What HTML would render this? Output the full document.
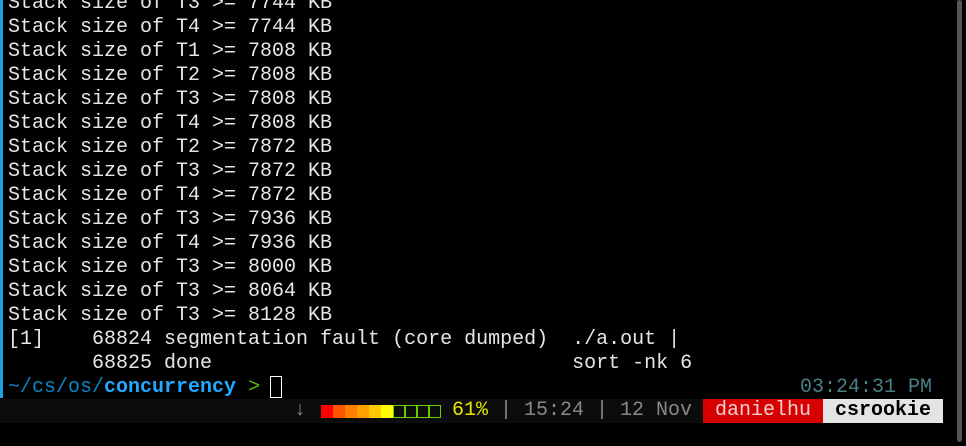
<!DOCTYPE html>
<html><head><meta charset="utf-8"><style>
html,body{margin:0;padding:0;background:#000;width:966px;height:446px;overflow:hidden}
body{position:relative;font-family:"Liberation Mono",monospace;font-size:20px;color:#e6e6e6}
.l{position:absolute;left:8px;height:24px;line-height:24px;white-space:pre;margin-top:2px}
#bar{position:absolute;left:0;top:-10px;width:3px;height:408px;background:#1a9fe0}
#sb{position:absolute;left:0;top:399px;width:943px;height:24px;background:#0c0c0c}
.s{position:absolute;top:399px;height:24px;line-height:24px;white-space:pre}
.blk{position:absolute;top:405px;width:12px;height:13px;box-sizing:border-box}
#scroll{position:absolute;left:957px;top:0;width:5px;height:442px;background:#555;border-radius:3px}
</style></head><body>
<div id="bar"></div>
<div class="l" style="top:-10px">Stack size of T3 &gt;= 7744 KB</div>
<div class="l" style="top:14px">Stack size of T4 &gt;= 7744 KB</div>
<div class="l" style="top:38px">Stack size of T1 &gt;= 7808 KB</div>
<div class="l" style="top:62px">Stack size of T2 &gt;= 7808 KB</div>
<div class="l" style="top:86px">Stack size of T3 &gt;= 7808 KB</div>
<div class="l" style="top:110px">Stack size of T4 &gt;= 7808 KB</div>
<div class="l" style="top:134px">Stack size of T2 &gt;= 7872 KB</div>
<div class="l" style="top:158px">Stack size of T3 &gt;= 7872 KB</div>
<div class="l" style="top:182px">Stack size of T4 &gt;= 7872 KB</div>
<div class="l" style="top:206px">Stack size of T3 &gt;= 7936 KB</div>
<div class="l" style="top:230px">Stack size of T4 &gt;= 7936 KB</div>
<div class="l" style="top:254px">Stack size of T3 &gt;= 8000 KB</div>
<div class="l" style="top:278px">Stack size of T3 &gt;= 8064 KB</div>
<div class="l" style="top:302px">Stack size of T3 &gt;= 8128 KB</div>
<div class="l" style="top:326px">[1]    68824 segmentation fault (core dumped)  ./a.out |</div>
<div class="l" style="top:350px">       68825 done                              sort -nk 6</div>
<div class="l" style="top:374px"><span style="color:#0a86c4">~/cs/os/</span><span style="color:#1fa9ff;font-weight:bold">concurrency</span> <span style="color:#5fbf00">&gt;</span></div>
<div style="position:absolute;left:270px;top:376px;width:12px;height:22px;border:1px solid #fff;box-sizing:border-box"></div>
<div class="l" style="top:374px;left:800px;color:#4a7f86">03:24:31 PM</div>
<div id="sb"></div>
<div class="s" style="left:294px;color:#888">↓</div>
<div class="blk" style="left:321px;background:#ff0000"></div>
<div class="blk" style="left:333px;background:#ff5500"></div>
<div class="blk" style="left:345px;background:#ff7f00"></div>
<div class="blk" style="left:357px;background:#ffa000"></div>
<div class="blk" style="left:369px;background:#ffc800"></div>
<div class="blk" style="left:381px;background:#ffff00"></div>
<div class="blk" style="left:393px;border:1px solid #66cc00"></div>
<div class="blk" style="left:405px;border:1px solid #66cc00"></div>
<div class="blk" style="left:417px;border:1px solid #66cc00"></div>
<div class="blk" style="left:429px;border:1px solid #66cc00"></div>
<div class="s" style="left:452px;color:#e6e600">61%</div>
<div class="s" style="left:488px;color:#888"> | 15:24 | 12 Nov</div>
<div class="s" style="left:703px;width:120px;background:#d70000;color:#f0d0d0;text-align:center">danielhu</div>
<div class="s" style="left:823px;width:120px;background:#e4e4e4;color:#000;font-weight:bold;text-align:center">csrookie</div>
<div id="scroll"></div>
</body></html>
